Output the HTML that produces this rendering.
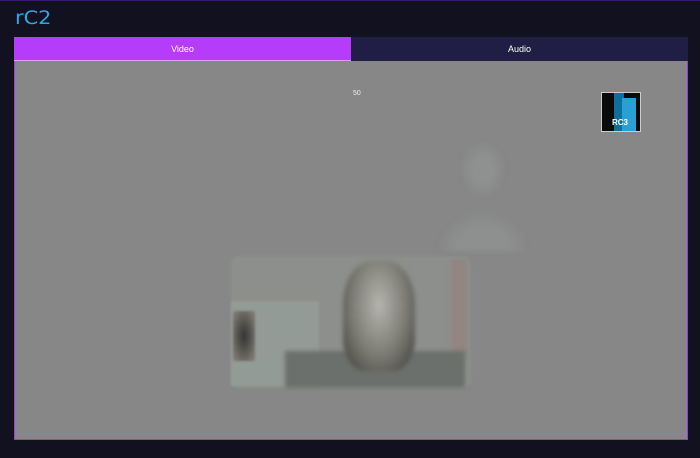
<!DOCTYPE html>
<html><head><meta charset="utf-8"><style>
html,body{margin:0;padding:0}
body{width:700px;height:458px;background:#12111f;position:relative;overflow:hidden;font-family:"Liberation Sans",sans-serif}
.top{position:absolute;left:0;top:0;width:700px;height:1px;background:#3a1a6a}
.logo{position:absolute;left:15px;top:7px;color:#2aa8e6;font-size:19px;letter-spacing:0px;font-family:"DejaVu Sans",sans-serif;transform:scaleX(1.1);transform-origin:left}
.tabs{position:absolute;left:14px;top:37px;width:674px;height:24px;display:flex;font-size:9px;color:#fff}
.tabs div{flex:1;display:flex;align-items:center;justify-content:center}
.v{background:#b43cfa;border-bottom:1px solid #d9a0ff;box-sizing:border-box}
.a{background:#211e45}
.main{position:absolute;left:14px;top:61px;width:672px;height:378px;background:#878787;border:1px solid #9a3ce0;border-top:none}
.n{position:absolute;left:338px;top:29px;font-size:7px;color:#eee}
.rc3{position:absolute;left:586px;top:31px;width:38px;height:38px;background:#0a0a0a;border:1px solid #ccc;overflow:hidden}
.rc3 .b1{position:absolute;left:12px;top:0;width:10px;height:38px;background:#0e6e9c}
.rc3 .b2{position:absolute;left:20px;top:5px;width:14px;height:33px;background:#2a9fd6}
.rc3 span{position:absolute;left:10px;top:25px;font-size:8px;color:#fff;font-weight:bold}
.ghost{position:absolute;left:418px;top:70px;width:100px;height:120px;background:radial-gradient(ellipse 22px 28px at 50% 32%,#8e918f 50%,transparent 100%),radial-gradient(ellipse 45px 40px at 50% 100%,#8d908e 60%,transparent 100%);filter:blur(2px)}
.vid{position:absolute;left:216px;top:195px;width:240px;height:132px;background:#8c8f8b;border-radius:8px;filter:blur(1px)}
.face{position:absolute;left:328px;top:200px;width:72px;height:110px;background:radial-gradient(ellipse at 50% 40%,#b5b4ad,#7a7a72 55%,#4a4a44 90%);border-radius:40% 40% 30% 30%;filter:blur(2px)}
.body{position:absolute;left:270px;top:290px;width:180px;height:37px;background:#6c706c;filter:blur(2px)}
.left{position:absolute;left:216px;top:240px;width:88px;height:85px;background:#939b96;filter:blur(1px)}
.lf{position:absolute;left:218px;top:250px;width:22px;height:50px;background:radial-gradient(#333,#8a857c);filter:blur(1px)}
.red{position:absolute;left:436px;top:198px;width:16px;height:100px;background:#938581;filter:blur(2px)}
</style></head><body>
<div class="top"></div>
<div class="logo">rC2</div>
<div class="tabs"><div class="v">Video</div><div class="a">Audio</div></div>
<div class="main">
<div class="n">50</div>
<div class="rc3"><div class="b1"></div><div class="b2"></div><span>RC3</span></div>
<div class="ghost"></div>
<div class="vid"></div><div class="left"></div><div class="lf"></div><div class="red"></div><div class="body"></div><div class="face"></div>
</div>
</body></html>
